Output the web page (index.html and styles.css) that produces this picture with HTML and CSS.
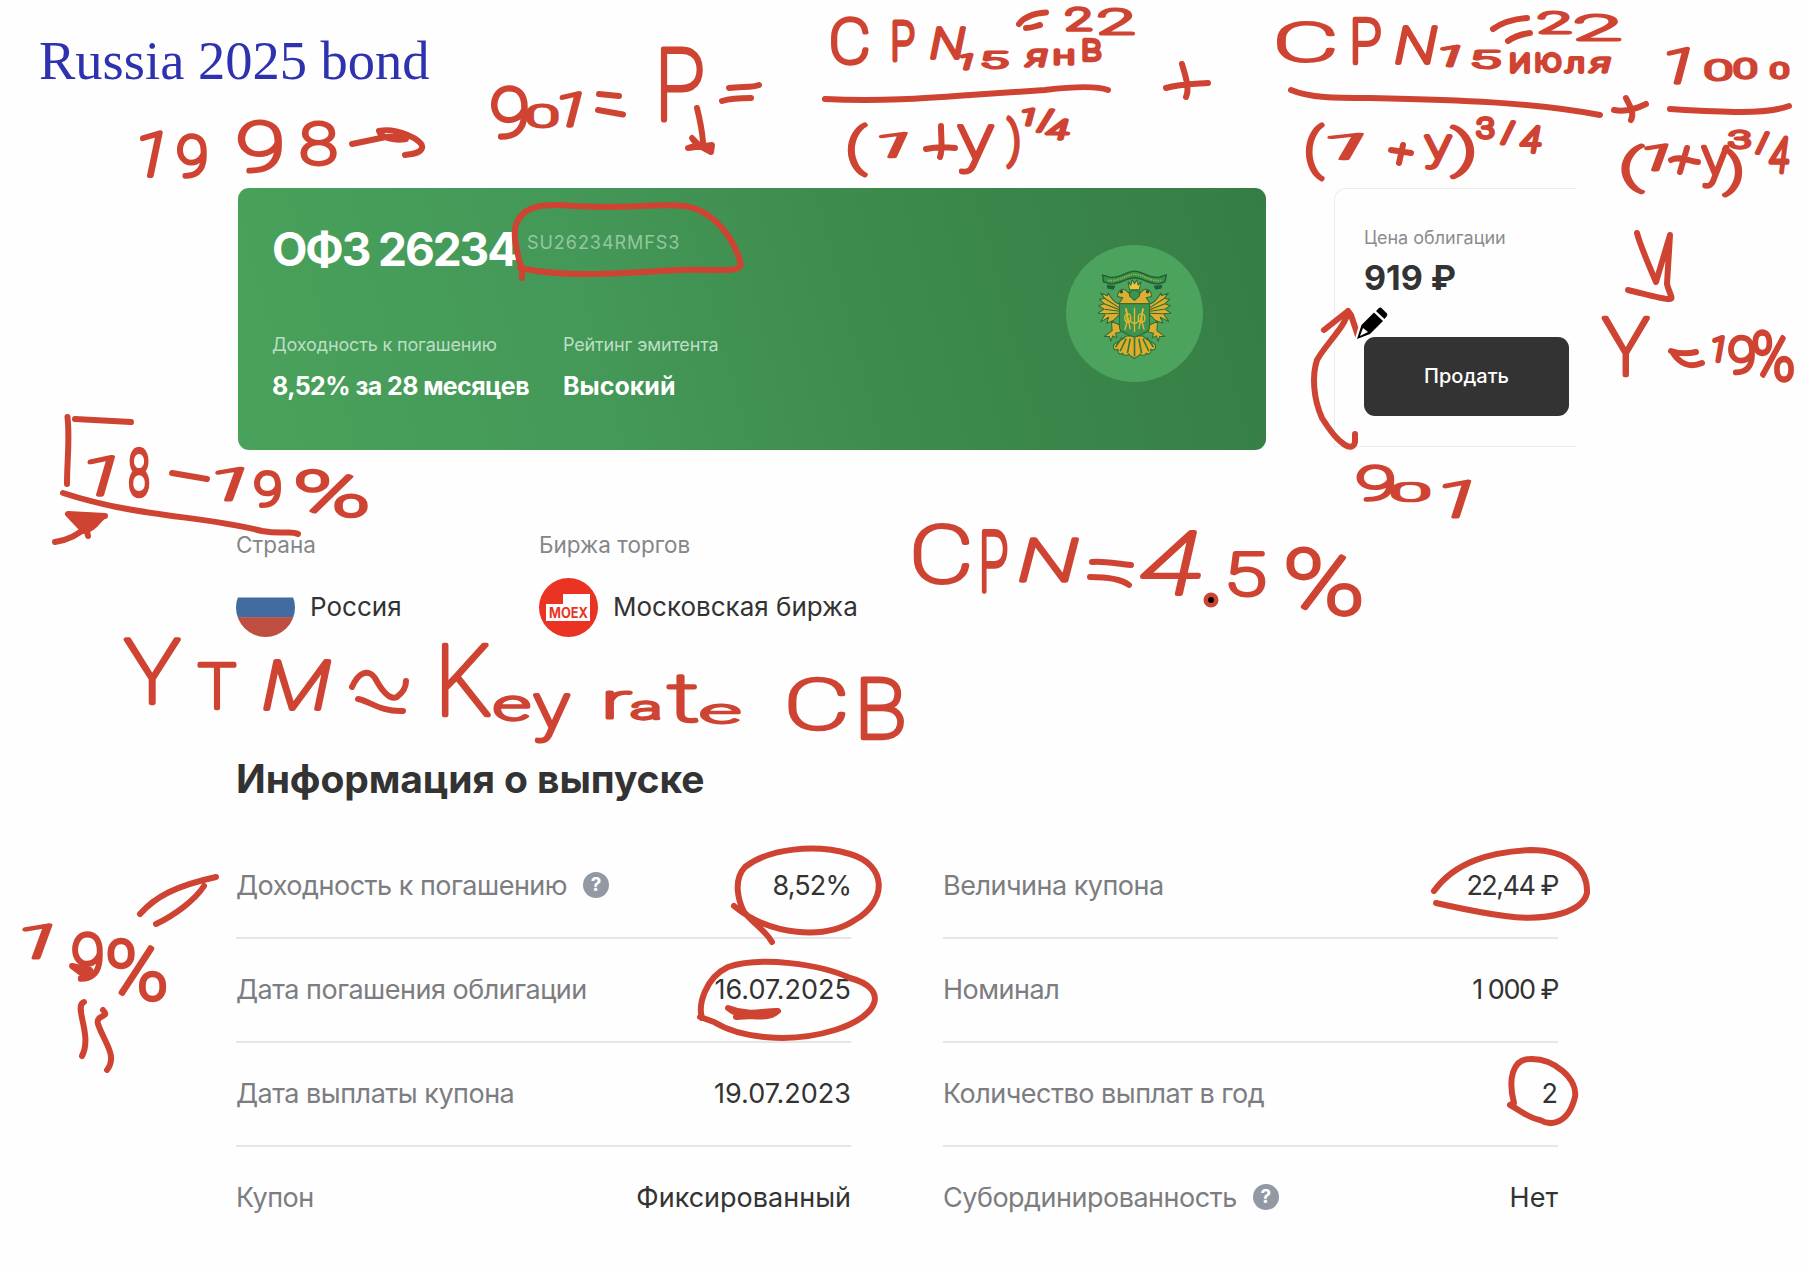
FILE: index.html
```html
<!DOCTYPE html>
<html lang="ru">
<head>
<meta charset="utf-8">
<title>Russia 2025 bond</title>
<link rel="stylesheet" href="styles.css">
</head>
<body>
<main class="slide">
  <h1 class="slide-title">Russia 2025 bond</h1>

  <div class="top">
    <section class="hero">
      <div class="hero-info">
        <div class="hero-name"><h2>ОФЗ 26234</h2><span class="ticker">SU26234RMFS3</span></div>
        <dl class="hero-facts">
          <div><dt>Доходность к погашению</dt><dd class="yield">8,52% за 28 месяцев</dd></div>
          <div><dt>Рейтинг эмитента</dt><dd>Высокий</dd></div>
        </dl>
      </div>
      <svg class="emblem" viewBox="78 74 410 410">
        <circle cx="283" cy="279" r="205" fill="#4ba35e"/>
        <g stroke="#2b6b35" stroke-width="3" stroke-linejoin="round">
          <path fill="#dfae2e" d="M242 252 C226 250 214 236 204 218 L202 226 L182 218 L194 234 L178 236 L192 250 L176 256 L192 266 L174 278 L196 280 L182 304 L206 290 L200 308 L220 300 L242 278Z M324 252 C340 250 352 236 362 218 L364 226 L384 218 L372 234 L388 236 L374 250 L390 256 L374 266 L392 278 L370 280 L386 304 L360 290 L368 308 L346 300 L324 278Z"/>
          <path fill="none" d="M238 262 L194 234 M238 268 L192 250 M238 272 L194 266 M238 278 L198 280 M328 262 L372 234 M328 268 L374 250 M328 272 L372 266 M328 278 L368 280"/>
          <path fill="#dfae2e" d="M214 302 L240 314 L242 334 L226 338 L230 352 L218 346 L212 362 L208 348 L192 348 L206 338 L216 330Z M352 302 L326 314 L324 334 L340 338 L336 352 L348 346 L354 362 L358 348 L374 348 L360 338 L350 330Z"/>
          <path fill="#e0ad2a" d="M283 346 L258 346 C246 362 232 360 220 374 C218 386 226 392 234 386 C232 398 240 404 248 398 C250 406 262 406 266 400 C270 410 280 408 283 414 C286 408 296 410 300 400 C304 406 316 406 318 398 C326 404 334 398 332 386 C340 392 348 386 346 374 C334 360 320 362 308 346Z"/>
          <path fill="#dfae2e" d="M236 250 L248 232 L232 228 C234 208 250 200 260 212 L270 222 L283 234 L296 222 L306 212 C316 200 334 208 334 228 L318 232 L330 250Z"/>
          <path fill="#3c9450" d="M238 250 H328 V322 C328 336 306 338 283 350 C260 338 238 336 238 322Z"/>
          <path fill="#3c9450" d="M268 214 L283 208 L298 214 V226 L283 240 L268 226Z"/>
          <path fill="#f0c33c" d="M264 184 L272 194 L276 178 L283 190 L290 178 L294 194 L302 184 L298 208 H268Z"/>
        </g>
        <path d="M246 350 L226 380 M258 354 L240 392 M270 354 L262 398 M283 350 V408 M296 354 L304 398 M308 354 L326 392 M320 350 L340 380" stroke="#33793c" stroke-width="5" fill="none"/>
        <path d="M258 264 L270 326 M308 264 L296 326 M310 264 C300 290 306 310 312 328 M256 264 C266 290 260 310 254 328 M283 262 V334 M254 292 C254 276 272 276 272 292 C272 310 254 310 254 292 M294 292 C294 276 314 276 314 292 C314 310 294 310 294 292 M270 292 C270 314 296 314 296 292" stroke="#e9b62c" stroke-width="4" fill="none"/>
        <path d="M188 164 L208 170 C238 176 258 152 283 152 C308 152 328 176 358 170 L378 164 L374 184 L358 190 C328 194 308 172 283 172 C258 172 238 194 208 190 L190 184Z" fill="#368f4b" stroke="#225c31" stroke-width="4"/>
        <path d="M204 180 C240 184 258 162 283 162 C308 162 328 184 362 180" stroke="#9fb840" stroke-width="5" stroke-dasharray="4 3" fill="none"/>
        <path d="M200 194 L226 196 L220 208 L202 204Z M366 194 L340 196 L346 208 L364 204Z" fill="#205c39"/>
        <circle cx="244" cy="214" r="5" fill="#274b42"/><circle cx="322" cy="214" r="5" fill="#274b42"/>
      </svg>
    </section>

    <aside class="price">
      <p class="price-label">Цена облигации</p>
      <p class="price-value">919 ₽</p>
      <button class="sell">Продать</button>
    </aside>
  </div>

  <div class="market">
    <div class="market-item country">
      <p>Страна</p>
      <div class="market-value">
        <svg width="59" height="59" viewBox="0 0 59 59"><clipPath id="disc"><circle cx="29.500" cy="29.500" r="29.500"/></clipPath><g clip-path="url(#disc)"><rect width="59" height="59" fill="#fefefe"/><rect y="19.500" width="59" height="20" fill="#426b9f"/><rect y="39.200" width="59" height="20" fill="#be4f40"/></g></svg>
        <span>Россия</span>
      </div>
    </div>
    <div class="market-item exchange">
      <p>Биржа торгов</p>
      <div class="market-value">
        <svg width="59" height="59" viewBox="0 0 59 59"><circle cx="29.500" cy="29.500" r="29.500" fill="#ea3323"/><path d="M7 26H24V16H51V43H7Z" fill="#fff"/><text class="moex" x="10" y="40" textLength="39" lengthAdjust="spacingAndGlyphs">MOEX</text></svg>
        <span>Московская биржа</span>
      </div>
    </div>
  </div>

  <section class="issue">
    <h2>Информация о выпуске</h2>
    <div class="tables">
      <dl>
        <div><dt>Доходность к погашению</dt><i class="help">?</i><dd class="percent">8,52%</dd></div>
        <div><dt>Дата погашения облигации</dt><dd>16.07.2025</dd></div>
        <div><dt>Дата выплаты купона</dt><dd>19.07.2023</dd></div>
        <div><dt>Купон</dt><dd>Фиксированный</dd></div>
      </dl>
      <dl>
        <div><dt>Величина купона</dt><dd class="money">22,44 ₽</dd></div>
        <div><dt>Номинал</dt><dd class="money">1 000 ₽</dd></div>
        <div><dt>Количество выплат в год</dt><dd>2</dd></div>
        <div><dt>Субординированность</dt><i class="help">?</i><dd>Нет</dd></div>
      </dl>
    </div>
  </section>

  <svg class="ink" viewBox="0 0 1808 1266">
    <g id="notes"></g>
    <g class="strokes">
      <!-- operators -->
      <path d="M599 94 L619 96 M598 110 L623 114.500"/>
      <path d="M729 88 C740 86 752 88 759 85 M722 101 C732 98 740 98 751 98"/>
      <path d="M1019 24 C1025 16 1035 13 1046 12.500 M1026 28 C1032 28 1036 26 1040 25"/>
      <path d="M926 149 C935 147 945 147 955 148 M941 126 C941 140 943 150 940 157"/>
      <path d="M1166 88 C1180 84 1195 84 1208 83 M1182 64 C1185 75 1190 88 1186 97"/>
      <path d="M1493 29 C1503 22 1515 19 1527 18 M1508 41 C1515 36 1522 34 1530 33"/>
      <path d="M1391 150 L1411 153 M1403 145 L1399 163"/>
      <path d="M1614 110 C1625 112 1638 108 1646 104 M1626 98 C1629 105 1635 112 1631 120"/>
      <path d="M1671 160 C1680 155 1690 162 1698 162 M1687 148 L1680 172"/>
      <path d="M1671 351 C1680 354 1688 354 1696 352 M1673 353 C1680 364 1690 368 1702 363"/>
      <path d="M172 473 L207 479"/>
      <path d="M1092 562 C1105 561 1118 564 1131 565 M1090 577 C1105 577 1120 578 1129 585"/>
      <path d="M352 687 C358 673 368 668 375 678 C383 693 390 700 397 697 C403 692 406 688 406 681 M358 699 C370 701 380 712 403 711"/>
      <!-- arrows -->
      <path d="M352 144 L381 138 C392 135 400 138 406 139 C395 141 381 138 379 131 C395 127 425 140 422 148 C420 154 411 154 405 155"/>
      <path d="M697 108 C700 120 702 130 703 142"/>
      <path class="solid" d="M692 138 L697 145 L688 148 L712 145 L711 152 L700 146Z"/>
      <path d="M1637 233 C1640 245 1650 268 1656 282 L1670 235 L1667 284 C1669 293 1674 299 1670 299 C1665 300 1645 294 1628 290"/>
      <path d="M1355 434 L1355 442 C1353 452 1340 447 1322 418 C1313 398 1312 375 1317 360 C1325 345 1347 325 1348 311 L1324 330 M1348 311 L1351 315 L1358 336"/>
      <path d="M55 542 C70 540 82 532 91 524"/>
      <path class="solid" d="M68 514 L105 516 C98 517 98 528 84 531Z"/>
      <path d="M86 526 L88 536"/>
      <!-- fraction bars -->
      <path d="M825 99 C880 102 930 98 970 95 C1000 93 1030 91 1045 90 C1070 87 1095 85 1108 90"/>
      <path d="M1291 90 C1310 98 1335 98 1370 98 C1460 100 1530 102 1600 115"/>
      <path d="M1670 109 C1720 112 1765 115 1789 106"/>
      <!-- frame around 18-19% -->
      <path d="M67.500 417 C70 440 67 460 67 484 M75 419 L131 422 M63 493 C140 518 200 515 262 531 C285 535 290 530 298 534"/>
      <!-- loops round the figures -->
      <path d="M522 278 L522 270 C516 250 512 232 517 222 C525 205 545 203 575 206 C620 209 660 203 685 206 C715 211 735 240 741 265 C738 273 715 269 680 270 C630 272 570 279 520 268"/>
      <path d="M734 906 C770 936 825 940 855 920 C887 902 888 865 850 854 C815 844 770 848 745 867 C733 880 738 900 744 912 C755 925 765 930 772 942"/>
      <path d="M700 1017 L714 1022 C740 1038 790 1044 835 1030 C882 1015 888 988 850 978 C820 964 760 956 728 967 C705 978 698 1005 702 1018"/>
      <path class="solid" d="M728 1008 C735 1014 738 1011 736 1017 L752 1016 C768 1018 775 1014 778 1011 C765 1010 750 1017 728 1008Z"/>
      <path d="M1434 891 C1455 862 1490 852 1530 850 C1570 850 1588 870 1587 893 C1583 911 1550 922 1505 916 C1475 912 1455 907 1436 903"/>
      <path d="M1510 1105 L1514 1103 C1508 1080 1512 1059 1530 1059 C1555 1058 1578 1080 1575 1097 C1568 1125 1550 1126 1540 1120 C1528 1118 1520 1110 1510 1105"/>
      <!-- margin marks -->
      <path d="M140 914 C155 897 175 886 216 877 M204 886 C195 900 175 915 156 924 M84 1002 C73 1006 93 1035 82 1056 M103 1010 C111 1018 95 1014 98 1024 C104 1042 118 1056 107 1070"/>
      <path class="solid" d="M72 966 L84 975 L90 970Z"/>
    </g>
    <circle cx="1211" cy="600" r="7.500" fill="#cf4332"/><circle cx="1211" cy="600" r="3" fill="#000"/>
    <g class="pencil">
      <path d="M1357 339 L1361 325 L1378 308 C1380 306 1382 307 1388 314 L1372 334Z" fill="#fff" stroke="#fff" stroke-width="4"/>
      <path d="M1357 339 L1361.500 325 L1374 312.500 L1383 321 L1370 334Z"/><path d="M1376 311 L1379 308 Q1380.500 307 1382 308.500 L1387 313.500 Q1388 315 1386.500 316.500 L1384.500 319Z"/>
      <path d="M1360 336 L1363 328 L1368 332Z" fill="#fff"/>
    </g>
  </svg>
</main>
<script src="ink.js"></script>
</body>
</html>
```

FILE: styles.css
```css
* { box-sizing: border-box; }
body { margin: 0; background: #fefefe; color: #333; font-family: Inter, "Noto Sans", sans-serif; }
h1, h2, p, dl, dd { margin: 0; }
.slide { position: relative; width: 1808px; height: 1266px; overflow: hidden; }
.slide-title { height: 188px; padding: 29px 0 0 39px; font: 400 54.500px/64px "Liberation Serif", serif; color: #2f32ae; }

.top { display: flex; height: 262px; padding-left: 238px; }
.hero { display: flex; justify-content: space-between; width: 1028px; height: 262px; padding: 0 63px 0 34px; border-radius: 11px; background: linear-gradient(75deg, #49a25b 0%, #449858 35%, #3c8a4c 65%, #367d45 100%); color: #fff; }
.hero-name { display: flex; height: 110px; padding-top: 32px; gap: 12px; }
.hero-name h2 { width: 243px; font-size: 46px; line-height: 58px; letter-spacing: -2.100px; white-space: nowrap; }
.ticker { font-size: 18px; line-height: 46px; letter-spacing: .95px; color: #94c7a0; }
.hero-facts { display: flex; padding-top: 35px; }
.hero-facts div { width: 291px; white-space: nowrap; }
.hero-facts dt { font-size: 18px; line-height: 24px; letter-spacing: -.15px; color: #bcdfc4; }
.hero-facts dd { margin-top: 13px; font-size: 25px; line-height: 32px; font-weight: 700; }
.hero-facts .yield { letter-spacing: -.6px; }
.emblem { width: 137px; height: 137px; margin-top: 57px; }

.price { width: 242px; height: 259px; margin-left: 68px; padding: 37px 0 0 29px; border: solid #ececee; border-width: 1.500px 0 1.500px 1.500px; border-radius: 12px 0 0 0; }
.price-label { font-size: 18px; line-height: 24px; color: #8b8c90; }
.price-value { margin-top: 6px; font-size: 34px; line-height: 44px; font-weight: 700; }
.sell { display: block; width: 205px; height: 79px; margin-top: 37px; border: 0; border-radius: 11px; background: #333; color: #fff; font: 500 20px/79px Inter, sans-serif; padding: 0; }

.market { display: flex; height: 306px; padding: 81px 0 0 236px; }
.country { width: 303px; }
.market-item p { font-size: 22.500px; line-height: 28px; color: #85868b; }
.market-value { display: flex; align-items: center; gap: 15px; margin-top: 19px; font-size: 26px; }
.market-value span { padding-bottom: 2px; }
.moex { font: 700 14px Inter, sans-serif; fill: #ea3323; }

.issue { padding-left: 236px; }
.issue h2 { height: 79px; font-size: 39px; line-height: 45px; letter-spacing: -.1px; }
.tables { display: flex; gap: 92px; }
.tables dl { width: 615px; }
.tables dl > div { display: flex; align-items: center; height: 104px; padding-bottom: 2px; border-bottom: 2px solid #e6e6e8; font-size: 27px; }
.tables dl > div:last-child { border: 0; padding-bottom: 4px; }
.tables dt { color: #7c7d81; letter-spacing: -.5px; white-space: nowrap; }
.tables dd { margin-left: auto; white-space: nowrap; }
.tables .percent { letter-spacing: -.9px; }
.tables .money { letter-spacing: -1.500px; }
.help { width: 26px; height: 26px; margin-left: 16px; border-radius: 50%; background: #9299a4; color: #fff; font: 700 19px/26px Inter, sans-serif; text-align: center; }

.ink { position: absolute; inset: 0; width: 1808px; height: 1266px; pointer-events: none; }
.ink .strokes path { fill: none; stroke: #cf4332; stroke-width: 6; stroke-linecap: round; stroke-linejoin: round; }
.ink .strokes .solid { fill: #cf4332; }
.ink text { font-family: Roboto, "Noto Sans", sans-serif; font-weight: 100; fill: #cf4332; stroke: #cf4332; stroke-linejoin: round; }
.ink .slanted { font-style: italic; }
```

FILE: ink.js
```javascript
// Handwritten notes: each character with the box (left, top, right, bottom) it fills.
const notes = [
  ["1", 140,129,163,178], ["9", 177,134,207,179], ["9", 238,119,282,174], ["8", 300,121,337,167],
  ["9", 491,85,528,140], ["0", 527,102,558,130], ["1", 560,90,582,128], ["P", 660,46,703,122],
  ["C", 831,17,869,66], ["P", 892,20,915,62], ["N", 930,25,966,60], ["1", 960,52,973,71], ["5", 982,49,1008,70],
  ["я", 1024,48,1048,68], ["н", 1054,48,1074,66], ["в", 1082,38,1102,62], ["2", 1065,5,1092,32], ["2", 1098,6,1134,36],
  ["(", 848,121,868,178], ["1", 880,131,907,159], ["y", 957,123,995,175], [")", 1006,116,1020,170],
  ["1", 1022,107,1035,127], ["/", 1036,108,1055,134], ["4", 1045,118,1070,141],
  ["C", 1278,21,1335,64], ["P", 1352,17,1381,65], ["N", 1395,24,1438,65], ["1", 1441,44,1460,68], ["5", 1472,48,1500,70],
  ["и", 1510,52,1530,74], ["ю", 1535,52,1562,74], ["л", 1564,56,1584,74], ["я", 1588,56,1611,74],
  ["2", 1538,9,1571,35], ["2", 1575,12,1620,42],
  ["(", 1306,122,1325,182], ["1", 1329,132,1363,161], ["y", 1424,134,1453,170], [")", 1450,123,1474,180],
  ["3", 1476,116,1495,140], ["/", 1500,120,1516,146], ["4", 1519,125,1542,155],
  ["1", 1667,46,1690,85], ["0", 1705,57,1732,82], ["0", 1734,57,1757,80], ["0", 1770,60,1789,80],
  ["(", 1622,142,1645,195], ["1", 1645,143,1668,172], ["y", 1701,145,1730,188], [")", 1722,145,1742,198],
  ["3", 1728,128,1751,150], ["/", 1755,131,1770,156], ["4", 1768,136,1790,175],
  ["Y", 1601,315,1650,377], ["1", 1712,335,1725,363], ["9", 1728,335,1755,376], ["%", 1752,329,1794,383],
  ["9", 1357,463,1394,503], ["0", 1392,479,1429,503], ["1", 1443,478,1471,519],
  ["1", 88,454,115,497], ["8", 128,448,150,498], ["1", 216,466,244,502], ["9", 254,470,281,509], ["%", 296,468,367,519],
  ["C", 914,523,970,585], ["P", 981,530,1008,593], ["N", 1019,536,1079,583], ["4", 1140,530,1201,597], ["5", 1228,550,1265,598], ["%", 1286,545,1361,617],
  ["Y", 123,636,181,705], ["T", 197,661,237,710], ["M", 263,659,331,711],
  ["K", 441,642,491,717], ["e", 494,695,530,723], ["y", 533,692,571,743],
  ["r", 606,690,632,721], ["a", 631,700,660,722], ["t", 666,673,698,724], ["e", 701,703,740,726],
  ["C", 789,676,846,732], ["B", 860,675,904,740],
  ["1", 23,922,52,960], ["9", 72,932,103,982], ["%", 107,937,166,1002]
];

const PEN = 4.4;
const FACE = '100 100px Roboto, "Noto Sans", sans-serif';
const SLANTED = "1MN4я";
const layer = document.getElementById("notes");
const ruler = document.createElement("canvas").getContext("2d");

for (const [char, left, top, right, bottom] of notes) {
  const slanted = SLANTED.includes(char);
  ruler.font = (slanted ? "italic " : "") + FACE;
  const m = ruler.measureText(char);
  const inkWidth = m.actualBoundingBoxLeft + m.actualBoundingBoxRight;
  const inkHeight = m.actualBoundingBoxAscent + m.actualBoundingBoxDescent;
  const sx = (right - left - PEN) / inkWidth;
  const sy = (bottom - top - PEN) / inkHeight;
  const x = left + PEN / 2 + m.actualBoundingBoxLeft * sx;
  const y = top + PEN / 2 + m.actualBoundingBoxAscent * sy;
  const glyph = document.createElementNS("http://www.w3.org/2000/svg", "text");
  glyph.textContent = char;
  if (slanted) glyph.setAttribute("class", "slanted");
  glyph.setAttribute("font-size", 100);
  glyph.setAttribute("transform", `matrix(${sx} 0 0 ${sy} ${x} ${y})`);
  glyph.setAttribute("stroke-width", PEN / Math.sqrt(sx * sy));
  layer.append(glyph);
}
```
